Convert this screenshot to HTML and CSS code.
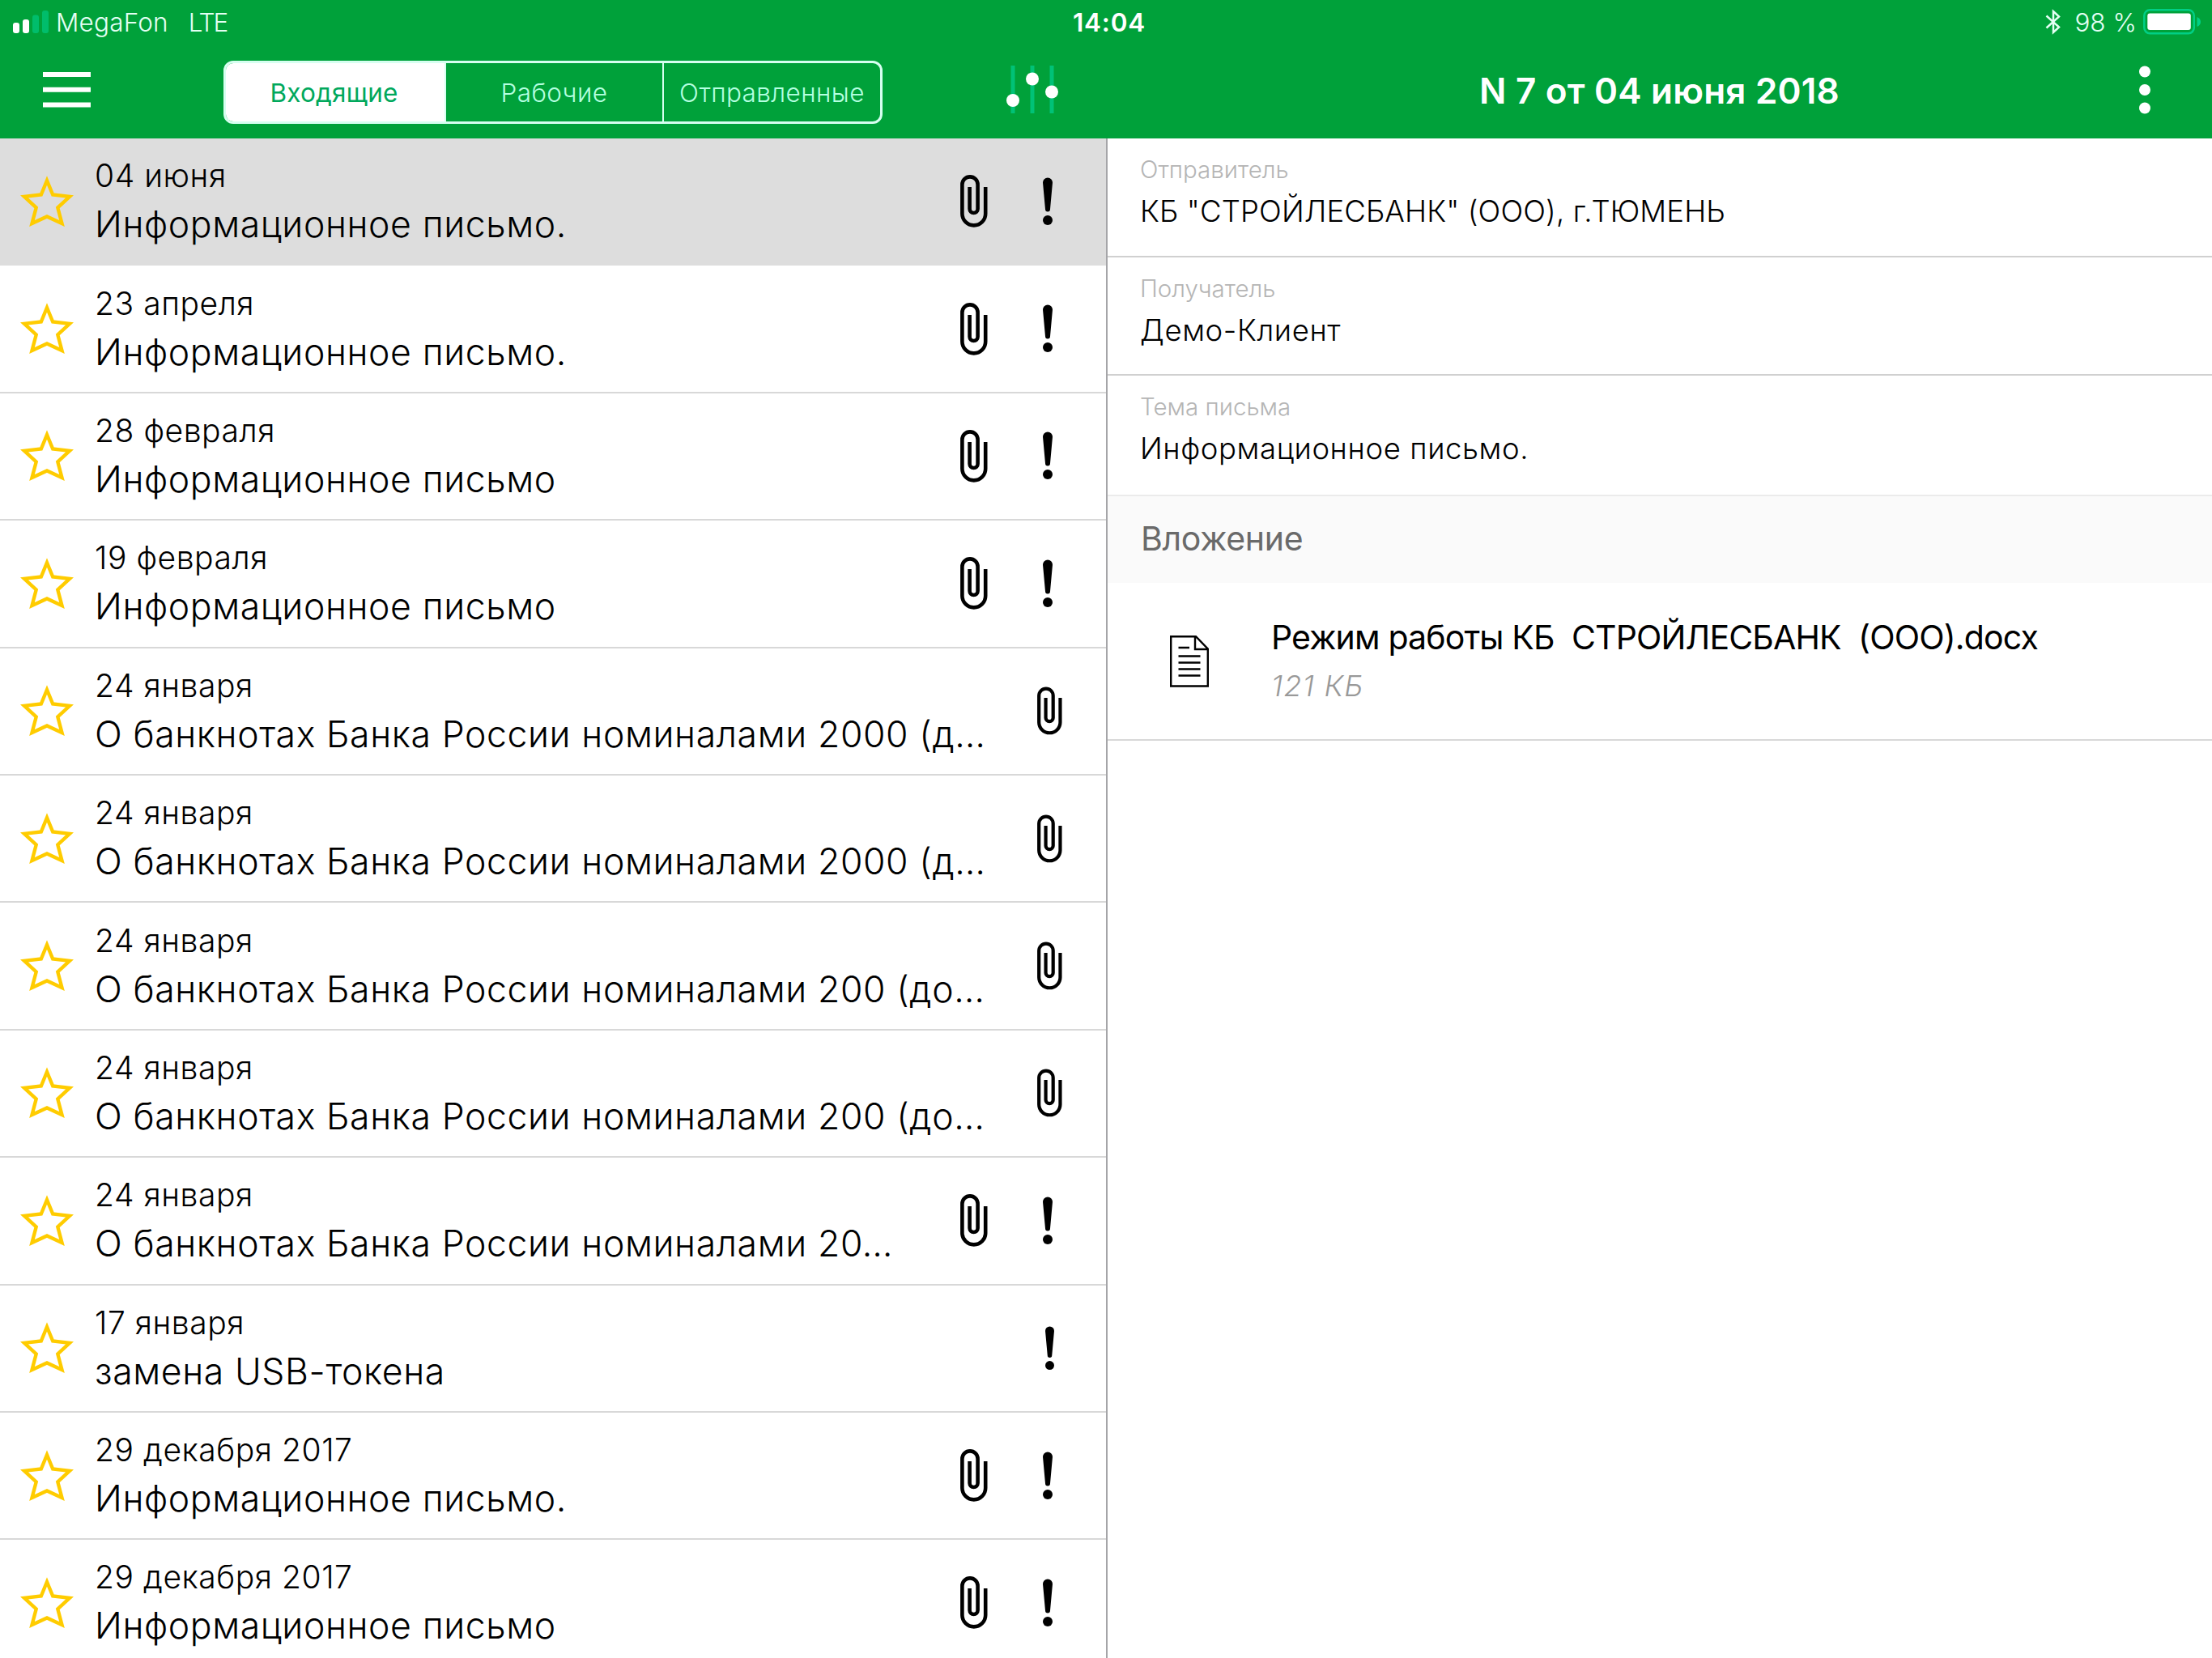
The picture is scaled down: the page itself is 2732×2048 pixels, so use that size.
FILE: index.html
```
<!doctype html>
<html lang="ru">
<head>
<meta charset="UTF-8">
<title>Письма</title>
<link rel="stylesheet" href="styles.css">
</head>
<body>
<svg class="sprite" width="0" height="0">
<symbol id="star" viewBox="0 0 66 64"><path d="M33 6 L40.2 23.500 L61 25.800 L46.300 39.500 L51.500 59 L33 50.500 L14.500 59 L19.700 39.500 L5 25.800 L25.800 23.500 Z" fill="none" stroke="#ffcc00" stroke-width="4.4"/></symbol>
<symbol id="clip" viewBox="0 0 34 65"><path d="M31.2 15 V48 A14.4 14.4 0 0 1 2.4 48 V12 A9.6 9.6 0 0 1 21.6 12 V42 A5 5 0 0 1 11.6 42 V15" fill="none" stroke="#000" stroke-width="4.6"/></symbol>
<symbol id="mark" viewBox="0 0 14 60"><path d="M1 6.5 A6 6 0 0 1 13 6.5 L10 39.5 A3 3 0 0 1 4 39.5 Z"/><circle cx="7" cy="53" r="6"/></symbol>
</svg>

<header class="top">
<div class="status">
<div class="network">
<svg class="signal" viewBox="0 0 46 28"><rect x="0" y="15" width="8" height="13" rx="3" fill="#fff"/><rect x="12" y="11" width="8" height="17" rx="3" fill="#fff"/><rect x="24" y="5.5" width="8" height="22.5" rx="3" fill="#00bd6b"/><rect x="36" y="0" width="8" height="28" rx="3" fill="#00bd6b"/></svg>
<span class="carrier">MegaFon</span>
<span class="net">LTE</span>
</div>
<span class="clock">14:04</span>
<div class="power">
<svg class="bt" viewBox="0 0 20 32"><path d="M1.5 8.5 L17 22.5 L10 29 V3 L17 9.500 L1.5 23.5" fill="none" stroke="#e4fff4" stroke-width="2.5"/></svg>
<span class="percent">98 %</span>
<svg class="battery" viewBox="0 0 72 32"><rect x="1.3" y="1.3" width="61.5" height="29" rx="7" fill="none" stroke="#00cf85" stroke-width="2.5"/><rect x="5.3" y="5.5" width="53.5" height="20.5" rx="3" fill="#fff"/><path d="M66.5 10 Q71 12 71 16 Q71 20 66.5 22 Z" fill="#00cf85"/></svg>
</div>
</div>
<div class="bar">
<div class="bar-left">
<svg class="burger" viewBox="0 0 59 44"><path d="M0 3 H59 M0 21.8 H59 M0 40.5 H59" stroke="#fff" stroke-width="6"/></svg>
<div class="tabs">
<a class="tab active">Входящие</a>
<a class="tab">Рабочие</a>
<a class="tab">Отправленные</a>
</div>
<svg class="filter" viewBox="0 0 64 60"><path d="M8 0 V59 M32 0 V59 M56 0 V59" stroke="#00c277" stroke-width="5"/><circle cx="8" cy="43" r="8" fill="#fff"/><circle cx="32" cy="16.5" r="8" fill="#fff"/><circle cx="56" cy="32.5" r="8" fill="#fff"/></svg>
</div>
<h1>N 7 от 04 июня 2018</h1>
<svg class="more" viewBox="0 0 14 60"><circle cx="7" cy="7.5" r="7" fill="#fff"/><circle cx="7" cy="30" r="7" fill="#fff"/><circle cx="7" cy="52.5" r="7" fill="#fff"/></svg>
</div>
</header>

<main>
<section class="list">
<div class="row selected"><svg class="star"><use href="#star"/></svg><div class="text"><div class="date">04 июня</div><div class="subject">Информационное письмо.</div></div><div class="icons"><svg class="clip" viewBox="0 0 34 65"><use href="#clip"/></svg><svg class="mark" viewBox="0 0 14 60"><use href="#mark"/></svg></div></div>
<div class="row"><svg class="star"><use href="#star"/></svg><div class="text"><div class="date">23 апреля</div><div class="subject">Информационное письмо.</div></div><div class="icons"><svg class="clip"><use href="#clip"/></svg><svg class="mark"><use href="#mark"/></svg></div></div>
<div class="row"><svg class="star"><use href="#star"/></svg><div class="text"><div class="date">28 февраля</div><div class="subject">Информационное письмо</div></div><div class="icons"><svg class="clip"><use href="#clip"/></svg><svg class="mark"><use href="#mark"/></svg></div></div>
<div class="row"><svg class="star"><use href="#star"/></svg><div class="text"><div class="date">19 февраля</div><div class="subject">Информационное письмо</div></div><div class="icons"><svg class="clip"><use href="#clip"/></svg><svg class="mark"><use href="#mark"/></svg></div></div>
<div class="row"><svg class="star"><use href="#star"/></svg><div class="text"><div class="date">24 января</div><div class="subject">О банкнотах Банка России номиналами 2000 (д…</div></div><div class="icons single"><svg class="clip"><use href="#clip"/></svg></div></div>
<div class="row"><svg class="star"><use href="#star"/></svg><div class="text"><div class="date">24 января</div><div class="subject">О банкнотах Банка России номиналами 2000 (д…</div></div><div class="icons single"><svg class="clip"><use href="#clip"/></svg></div></div>
<div class="row"><svg class="star"><use href="#star"/></svg><div class="text"><div class="date">24 января</div><div class="subject">О банкнотах Банка России номиналами 200 (до…</div></div><div class="icons single"><svg class="clip"><use href="#clip"/></svg></div></div>
<div class="row"><svg class="star"><use href="#star"/></svg><div class="text"><div class="date">24 января</div><div class="subject">О банкнотах Банка России номиналами 200 (до…</div></div><div class="icons single"><svg class="clip"><use href="#clip"/></svg></div></div>
<div class="row"><svg class="star"><use href="#star"/></svg><div class="text"><div class="date">24 января</div><div class="subject">О банкнотах Банка России номиналами 20…</div></div><div class="icons"><svg class="clip"><use href="#clip"/></svg><svg class="mark"><use href="#mark"/></svg></div></div>
<div class="row"><svg class="star"><use href="#star"/></svg><div class="text"><div class="date">17 января</div><div class="subject">замена USB-токена</div></div><div class="icons single"><svg class="mark"><use href="#mark"/></svg></div></div>
<div class="row"><svg class="star"><use href="#star"/></svg><div class="text"><div class="date">29 декабря 2017</div><div class="subject">Информационное письмо.</div></div><div class="icons"><svg class="clip"><use href="#clip"/></svg><svg class="mark"><use href="#mark"/></svg></div></div>
<div class="row"><svg class="star"><use href="#star"/></svg><div class="text"><div class="date">29 декабря 2017</div><div class="subject">Информационное письмо</div></div><div class="icons"><svg class="clip"><use href="#clip"/></svg><svg class="mark"><use href="#mark"/></svg></div></div>
</section>

<section class="detail">
<div class="field"><div class="label">Отправитель</div><div class="value caps">КБ "СТРОЙЛЕСБАНК" (ООО), г.ТЮМЕНЬ</div></div>
<div class="field"><div class="label">Получатель</div><div class="value">Демо-Клиент</div></div>
<div class="field last"><div class="label">Тема письма</div><div class="value">Информационное письмо.</div></div>
<h2>Вложение</h2>
<div class="file">
<svg class="doc" viewBox="0 0 48 64"><path d="M1.2 1.2 H32 L46.8 16.5 V62.5 H1.2 Z M31 1.2 V17 H46.8" fill="none" stroke="#000" stroke-width="2.4"/><path d="M10.5 15 H24 M10.5 25.5 H37.5 M10.5 33.5 H37.5 M10.5 41.5 H37.5 M10.5 49.5 H37.5" stroke="#000" stroke-width="2.6"/></svg>
<div>
<div class="name">Режим работы КБ&nbsp; СТРОЙЛЕСБАНК&nbsp; (ООО).docx</div>
<div class="size">121 КБ</div>
</div>
</div>
</section>
</main>
</body>
</html>
```
FILE: styles.css
```
* {
    box-sizing: border-box;
}
body {
    margin: 0;
    width: 2732px;
    height: 2048px;
    overflow: hidden;
    background: #fff;
    color: #000;
    font-family: Inter, "Liberation Sans", sans-serif;
    font-weight: 300;
}
.sprite {
    position: absolute;
}
svg {
    display: block;
    flex: none;
}
.top {
    height: 171px;
    background: #00a13a;
    color: #e4fff4;
}
.status {
    display: grid;
    grid-template-columns: 1fr auto 1fr;
    align-items: center;
    height: 54px;
    padding: 0 13px 0 21px;
    font-size: 31.5px;
}
.network {
    display: flex;
    align-items: center;
    margin-left: -5px;
}
.signal {
    width: 46px;
    height: 28px;
}
.carrier {
    margin-left: 7px;
    letter-spacing: 0.2px;
}
.net {
    margin-left: 25px;
    letter-spacing: -2px;
}
.clock {
    font-weight: 600;
    letter-spacing: 0.8px;
    color: #fff;
}
.power {
    display: flex;
    align-items: center;
    justify-content: flex-end;
}
.bt {
    width: 20px;
    height: 32px;
    margin-right: 16px;
}
.battery {
    width: 72px;
    height: 32px;
    margin-left: 8px;
}
.bar {
    display: flex;
    align-items: center;
    height: 117px;
}
.bar-left {
    display: flex;
    align-items: center;
    width: 1367px;
    padding-left: 53px;
}
.burger {
    width: 59px;
    height: 44px;
    margin-bottom: 4px;
}
.tabs {
    display: flex;
    width: 814px;
    height: 78px;
    margin: 2px 0 0 164px;
    border: 3px solid #d6fff0;
    border-radius: 12px;
    overflow: hidden;
}
.tab {
    flex: 1;
    text-align: center;
    font-size: 31.5px;
    line-height: 74px;
    letter-spacing: 0.4px;
    color: #b4ffe0;
}
.tab + .tab {
    border-left: 2px solid #d6fff0;
}
.tab.active {
    padding-right: 3px;
    background: #fff;
    color: #00a85c;
    font-weight: 400;
    letter-spacing: 0.2px;
}
.filter {
    width: 64px;
    height: 60px;
    margin: 0 0 4px 153px;
}
h1 {
    flex: 1;
    margin: 0 0 2px 90px;
    text-align: center;
    font-size: 44px;
    font-weight: 600;
    letter-spacing: 0.2px;
    color: #fff;
}
.more {
    width: 14px;
    height: 60px;
    margin: 0 76px 4px 0;
}
main {
    display: flex;
    height: 1877px;
}
.list {
    width: 1368px;
    border-right: 2px solid #a5a5a8;
    overflow: hidden;
}
.row {
    display: flex;
    align-items: center;
    height: 157.4px;
    padding-left: 25px;
    border-bottom: 2px solid #d8d8d8;
}
.row.selected {
    background: #dddddd;
    border-color: #dddddd;
}
.star {
    width: 66px;
    height: 64px;
}
.text {
    flex: 1;
    margin-left: 26px;
    white-space: nowrap;
}
.date {
    font-size: 39px;
    line-height: 57px;
    letter-spacing: 0.55px;
}
.subject {
    font-size: 44.5px;
    line-height: 64px;
    letter-spacing: 0.62px;
}
.icons {
    display: flex;
    align-items: center;
    margin-right: 65px;
}
.clip {
    width: 34px;
    height: 65px;
}
.mark {
    width: 14px;
    height: 60px;
    margin-left: 67px;
}
.single {
    margin-right: 54px;
}
.single .clip {
    width: 31px;
    height: 60px;
}
.single .mark {
    width: 13px;
    height: 55px;
    margin-right: 9px;
}
.detail {
    flex: 1;
}
.field {
    height: 146.6px;
    padding: 20px 40px 0;
    border-bottom: 2px solid #d0d0d0;
}
.field.last {
    height: 149px;
    border-color: #ebebeb;
}
.label {
    font-size: 29.5px;
    line-height: 37px;
    color: #b5b5b5;
}
.value {
    font-size: 36.5px;
    line-height: 66px;
    letter-spacing: 0.6px;
}
.value.caps {
    letter-spacing: 0.12px;
}
h2 {
    height: 107px;
    margin: 0;
    padding-left: 41px;
    background: #fafafa;
    font-size: 41px;
    line-height: 105px;
    font-weight: 400;
    letter-spacing: -0.3px;
    color: #6a6a6a;
}
.file {
    display: flex;
    align-items: center;
    height: 195px;
    padding-left: 77px;
    border-bottom: 2px solid #d8d8d8;
}
.doc {
    width: 48px;
    height: 64px;
    margin-right: 77px;
}
.name {
    font-size: 41px;
    line-height: 60px;
    font-weight: 400;
    letter-spacing: -0.85px;
}
.size {
    font-size: 36px;
    line-height: 60px;
    font-style: italic;
    letter-spacing: 1.2px;
    color: #999;
}
```
